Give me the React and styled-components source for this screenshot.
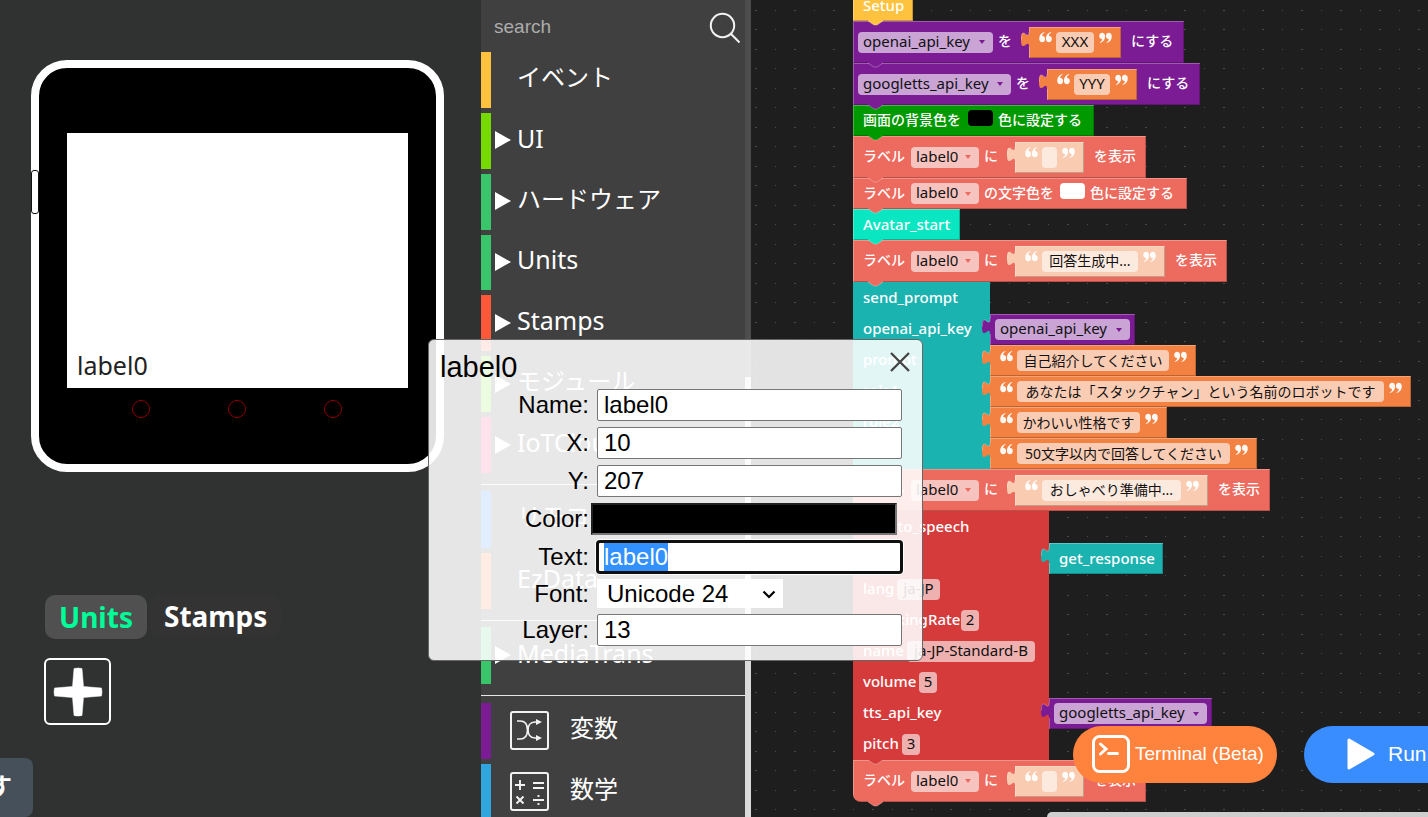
import React, { useEffect, useRef } from "react";
import styled, { createGlobalStyle, css } from "styled-components";

const sans = `"Liberation Sans", "Noto Sans CJK JP", sans-serif`;
const ui = `"Noto Sans", "Noto Sans CJK JP", sans-serif`;

const Global = createGlobalStyle`
  *, *::before, *::after { box-sizing: border-box; }
  body { margin: 0; background: #1e1e1e; overflow: hidden; font-family: ${ui}; }
  button, input, select { font: inherit; }
  button { border: 0; padding: 0; background: none; color: inherit; cursor: pointer; }
`;

const Page = styled.div`
  position: relative;
  display: grid;
  grid-template-columns: 481px 270px minmax(0, 1fr);
  height: 100vh;
  overflow: hidden;
`;

/* ---------- simulator ---------- */

const Simulator = styled.aside`
  display: flex;
  flex-direction: column;
  background: #303231;
  min-height: 0;
  overflow: hidden;
`;

const Device = styled.section`
  position: relative;
  flex: none;
  width: 413px;
  height: 412px;
  margin: 60px 0 0 31px;
  padding: 65px 28px 0;
  border: 8px solid #fff;
  border-radius: 36px;
  background: #000;
`;

const PowerKey = styled.span`
  position: absolute;
  left: -8px;
  top: 102px;
  width: 8px;
  height: 44px;
  border: 1px solid #111;
  border-radius: 3px;
  background: #fff;
`;

const Screen = styled.div`
  display: flex;
  align-items: flex-end;
  height: 255px;
  padding: 0 10px 6px;
  background: #fff;
  color: #222;
  font-size: 25px;
  line-height: 34px;
`;

const TouchKeys = styled.div`
  display: flex;
  justify-content: center;
  gap: 78px;
  padding: 12px 2px 0 0;
`;

const TouchKey = styled.button`
  width: 18px;
  height: 18px;
  border: 1px solid #8a0008;
  border-radius: 50%;
`;

const TabBar = styled.div`
  display: flex;
  gap: 3px;
  align-items: flex-start;
  margin: 123px 0 0 45px;
`;

const Tab = styled.button`
  height: ${(p) => (p.$active ? 44 : 42)}px;
  padding: 0 14px;
  border-radius: 10px;
  font-weight: 700;
  font-size: 28px;
  line-height: 42px;
  background: ${(p) => (p.$active ? "#505050" : "#333333")};
  color: ${(p) => (p.$active ? "#00ff99" : "#fff")};
`;

const AddUnit = styled.button`
  flex: none;
  display: grid;
  place-items: center;
  width: 67px;
  height: 67px;
  margin: 19px 0 0 44px;
  border: 2px solid #fff;
  border-radius: 6px;
`;

const ResetButton = styled.button`
  flex: none;
  display: flex;
  justify-content: flex-end;
  align-items: center;
  width: 33px;
  height: 59px;
  margin-top: auto;
  padding: 0 21px 6px 0;
  border-radius: 0 8px 8px 0;
  background: #45505b;
  color: #fff;
  font-size: 24px;
  font-weight: 700;
  overflow: hidden;
`;

/* ---------- toolbox ---------- */

const Toolbox = styled.nav`
  display: grid;
  grid-template-columns: minmax(0, 1fr) 6px;
  background: #404040;
  color: #fff;
  min-height: 0;
  overflow: hidden;
`;

const ToolboxBody = styled.div`
  min-height: 0;
  overflow: hidden;
`;

const SearchBar = styled.div`
  display: flex;
  align-items: center;
  height: 52px;
  padding: 3px 4px 0 13px;
`;

const SearchInput = styled.input`
  flex: 1;
  min-width: 0;
  border: 0;
  padding: 0 0 2px;
  outline: 0;
  background: transparent;
  color: #fff;
  font-family: ${sans};
  font-size: 19px;
  &::placeholder { color: #adadad; opacity: 1; }
`;

const Group = styled.div`
  display: grid;
  grid-auto-rows: 1fr;
  gap: 5px;
  height: ${(p) => p.$h}px;
`;

const Category = styled.button`
  display: flex;
  align-items: center;
  width: 100%;
  padding: 0 0 6px 4px;
  border-left: 10px solid ${(p) => p.$color};
  text-align: left;
  font-size: 25px;
  line-height: 36px;
`;

const Arrow = styled.span`
  width: 0;
  height: 0;
  margin: 5px 6px 0 0;
  border-left: 16px solid ${(p) => (p.$shown ? "#fff" : "transparent")};
  border-top: 9px solid transparent;
  border-bottom: 9px solid transparent;
`;

const CategoryText = styled.span`
  font-size: ${(p) => (p.$cjk ? 24 : 25)}px;
`;

const IconBox = styled.span`
  display: grid;
  place-items: center;
  width: 39px;
  height: 39px;
  margin: 4px 21px 0 15px;
  border: 2px solid #f2f2f2;
  border-radius: 3px;
`;

const Rule = styled.hr`
  height: 1px;
  margin: ${(p) => p.$top}px 0 ${(p) => p.$bottom}px;
  border: 0;
  background: #e6e6e6;
`;

const Track = styled.div`
  padding-top: 377px;
  background: #4d4d4d;
`;

const Thumb = styled.div`
  height: 100%;
  background: #dadada;
`;

/* ---------- workspace ---------- */

const Workspace = styled.main`
  position: relative;
  overflow: hidden;
  background-color: #1e1e1e;
`;

const GridDots = styled.div`
  position: absolute;
  inset: 0;
  background-image: repeating-linear-gradient(90deg, transparent 0 4px, #4b4b4b 4px 6px, transparent 6px 24px, #4b4b4b 24px 25px, transparent 25px 39px);
  mask-image: repeating-linear-gradient(180deg, transparent 0 10px, #000 10px 11px, transparent 11px 29px, #000 29px 30px, transparent 30px 39px);
`;

/* The stack sits at a free position on the canvas. */
const Stack = styled.div`
  position: absolute;
  left: 102px;
  top: -10px;
  display: flex;
  flex-direction: column;
  align-items: flex-start;
  color: #fff;
  font-size: 15px;
  line-height: 20px;
  white-space: nowrap;
`;

const bevel = css`
  box-shadow: inset 1px 1px 0 rgba(255, 255, 255, 0.28), inset -1px -1px 0 rgba(0, 0, 0, 0.22);
`;

const BlockBox = styled.div`
  position: relative;
  flex: none;
  display: flex;
  align-items: center;
  gap: 5px;
  width: ${(p) => p.$w}px;
  height: ${(p) => p.$h}px;
  padding-left: ${(p) => (p.$pad === undefined ? 10 : p.$pad)}px;
  background: ${(p) => p.$color};
  border-radius: ${(p) => (p.$last ? "0 0 0 8px" : "0")};
  ${bevel}
`;

const TallBlock = styled.div`
  position: relative;
  display: grid;
  grid-template-columns: ${(p) => p.$w}px auto;
  background: linear-gradient(${(p) => p.$color}, ${(p) => p.$color}) 0 0 / ${(p) => p.$w}px 100% no-repeat;
`;

const BodyRow = styled.div`
  grid-column: 1;
  display: flex;
  align-items: center;
  gap: 5px;
  height: 31px;
  padding: 0 0 1px 10px;
`;

const NotchSvg = styled.svg`
  position: absolute;
  left: 14px;
  bottom: -5px;
  z-index: 1;
`;

const TabSvg = styled.svg`
  position: absolute;
  left: -8px;
  top: 5px;
`;

const QuoteSvg = styled.svg`
  flex: none;
  margin: 0 -1px 9px 0;
  transform: ${(p) => (p.$close ? "rotate(180deg)" : "none")};
`;

const Value = styled.div`
  position: relative;
  flex: none;
  display: flex;
  align-items: center;
  gap: 5px;
  width: ${(p) => p.$w}px;
  height: 31px;
  padding-left: ${(p) => (p.$pad === undefined ? 10 : p.$pad)}px;
  margin: ${(p) => (p.$inline ? "0 5px 0 11px" : "0")};
  background: ${(p) => p.$color};
  ${bevel}
`;

const Text = styled.span`
  flex: none;
  width: ${(p) => (p.$w ? p.$w + "px" : "auto")};
  padding-bottom: 2px;
  font-weight: 500;
  font-size: ${(p) => (p.$cjk ? 14 : 15)}px;
`;

const Dropdown = styled.button`
  flex: none;
  display: flex;
  align-items: center;
  justify-content: space-between;
  width: ${(p) => p.$w}px;
  height: 21px;
  padding: 0 8px 2px 5px;
  border-radius: 4px;
  background: rgba(255, 255, 255, 0.6);
  color: #111;
  line-height: 19px;
  &::after {
    content: "";
    margin-top: 2px;
    border: 3px solid transparent;
    border-top: 4px solid ${(p) => p.$color};
    border-bottom: 0;
  }
`;

const Field = styled.input`
  flex: none;
  width: ${(p) => p.$w}px;
  height: 21px;
  padding: 0 0 2px;
  border: 0;
  border-radius: 4px;
  outline: 0;
  background: rgba(255, 255, 255, 0.6);
  color: #111;
  text-align: center;
  font-size: ${(p) => (p.$cjk ? 14 : 15)}px;
`;

const Swatch = styled.button`
  flex: none;
  align-self: flex-start;
  width: 25px;
  height: 16px;
  margin-top: 5px;
  border-radius: 4px;
  background: ${(p) => p.$fill};
`;

const HScroll = styled.div`
  position: absolute;
  left: 296px;
  right: 0;
  bottom: 0;
  height: 5px;
  border-radius: 5px 0 0 0;
  background: #cecece;
`;

const Actions = styled.div`
  position: absolute;
  left: 322px;
  bottom: 34px;
  z-index: 3;
  display: flex;
  gap: 27px;
`;

const Action = styled.button`
  flex: none;
  display: flex;
  align-items: center;
  gap: ${(p) => p.$gap}px;
  width: 204px;
  height: 57px;
  padding: 0 0 2px ${(p) => p.$pad}px;
  border-radius: 29px;
  background: ${(p) => p.$color};
  color: #fff;
  font-family: ${sans};
  font-size: ${(p) => p.$size}px;
  white-space: nowrap;
`;

/* ---------- property dialog ---------- */

const Dialog = styled.form`
  position: absolute;
  left: 428px;
  top: 339px;
  z-index: 5;
  width: 495px;
  height: 322px;
  padding: 11px 20px 14px 11px;
  border: 1px solid #666;
  border-radius: 6px;
  background: rgba(255, 255, 255, 0.88);
  color: #000;
  font-family: ${sans};
  font-size: 24px;
`;

const DialogHead = styled.header`
  display: flex;
  justify-content: space-between;
  align-items: flex-start;
  height: 38px;
  margin-right: -9px;
`;

const DialogTitle = styled.h2`
  margin: 0;
  font-size: 29px;
  font-weight: 400;
  line-height: 32px;
`;

const Close = styled.button`
  width: 20px;
  height: 20px;
  margin: 1px 1px 0 0;
  display: grid;
`;

const Rows = styled.div`
  display: grid;
  gap: 6px;
`;

const FormRow = styled.div`
  display: grid;
  grid-template-columns: 149px minmax(0, 1fr);
  column-gap: 8px;
  align-items: center;
  label { text-align: right; line-height: 28px; }
`;

const TextInput = styled.input`
  width: 100%;
  height: 32px;
  padding: 0 6px;
  border: 1px solid #767676;
  border-radius: 2px;
  background: #fff;
  color: #000;
  outline: 0;
  &:focus { border: 2px solid #101010; padding: 0 5px; border-radius: 3px; box-shadow: 0 0 0 1px #101010, 0 0 0 2px #fff; }
  &::selection { background: #3390ff; color: #fff; }
`;

const ColorInput = styled.input`
  position: relative;
  left: -6px;
  width: 306px;
  height: 32px;
  border: 2px inset #767676;
  background: #000;
  color: #000;
`;

const SelectWrap = styled.div`
  position: relative;
  width: 186px;
  height: 29px;
  svg { position: absolute; right: 7px; top: 11px; pointer-events: none; }
`;

const FontSelect = styled.select`
  width: 100%;
  height: 29px;
  padding: 0 10px;
  border: 0;
  appearance: none;
  background: #fff;
  color: #000;
`;

/* ---------- block parts ---------- */

const C = {
  setup: "#ffc23e", variable: "#7b1c94", text: "#f38142", screen: "#009900", label: "#ec6a5e",
  avatar: "#09e6c1", prompt: "#1ab3b0", tts: "#d63b3b", shadow: "#f9cbb0",
};

const Notch = ({ color }) => (
  <NotchSvg width="17" height="6" viewBox="0 0 17 6">
    <path d="M1 0V1L7 5H10L16 1V0Z" fill={color} />
    <path d="M1 1L7 5H10L16 1" fill="none" stroke="#fff" strokeOpacity=".28" />
  </NotchSvg>
);

const PlugTab = ({ color }) => (
  <TabSvg width="9" height="16" viewBox="0 0 9 16">
    <path d="M9 0H8C8 10 0 -8 0 7.5S8 5 8 15H9Z" fill={color} />
    <path d="M8 0C8 10 0.5 -8 0.5 7.5" fill="none" stroke="#fff" strokeOpacity=".28" />
  </TabSvg>
);

const Block = ({ children, ...rest }) => (
  <BlockBox {...rest}>
    {children}
    <Notch color={rest.$color} />
  </BlockBox>
);

const Quote = ({ close }) => (
  <QuoteSvg $close={close} width="13" height="11" viewBox="0 0 13 11" fill="#fff" fillOpacity=".95" aria-hidden="true">
    <path d="M5.600 .6C4 1.500 3.200 2.800 3.200 4.100C4.900 4 6.100 5.200 6.100 7C6.100 9 4.900 10.300 3.200 10.300C1.300 10.300 .2 8.900 .2 6.600C.2 3.600 2 1 5.200 0Z" />
    <path d="M12.300 .6C10.700 1.500 9.900 2.800 9.900 4.100C11.600 4 12.800 5.200 12.800 7C12.800 9 11.600 10.300 9.900 10.300C8 10.300 6.900 8.900 6.900 6.600C6.900 3.600 8.700 1 11.900 0Z" />
  </QuoteSvg>
);

const TextValue = ({ value, w, cjk, inline, shadow }) => {
  const color = shadow ? C.shadow : C.text;
  return (
    <Value $w={w + 54} $color={color} $inline={inline}>
      <PlugTab color={color} />
      <Quote />
      <Field $w={w} $cjk={cjk} defaultValue={value} aria-label="text" />
      <Quote close />
    </Value>
  );
};

const VarValue = ({ name, w }) => (
  <Value $w={w + 10} $color={C.variable} $pad={5}>
    <PlugTab color={C.variable} />
    <Dropdown type="button" $w={w} $color={C.variable}>{name}</Dropdown>
  </Value>
);

const SetVar = ({ name, nameW, value, valueW, w }) => (
  <Block $w={w} $h={42} $color={C.variable} $pad={5}>
    <Dropdown type="button" $w={nameW} $color={C.variable}>{name}</Dropdown>
    <Text $cjk $w={15}>を</Text>
    <TextValue value={value} w={valueW} inline />
    <Text $cjk>にする</Text>
  </Block>
);

const ShowLabel = ({ value, valueW, last }) => (
  <Block $w={valueW + 278} $h={42} $color={C.label} $last={last}>
    <Text $cjk $w={43}>ラベル</Text>
    <Dropdown type="button" $w={68} $color={C.label}>label0</Dropdown>
    <Text $cjk $w={15}>に</Text>
    <TextValue value={value} w={valueW} cjk inline shadow />
    <Text $cjk>を表示</Text>
  </Block>
);

const TitleRow = styled(BodyRow)`
  height: 32px;
`;

const Param = ({ name, w, value, fieldW }) => (
  <BodyRow>
    <Text $w={w}>{name}</Text>
    <Field $w={fieldW} defaultValue={value} aria-label={name} />
  </BodyRow>
);

const ValueCell = styled.div`
  grid-column: 2;
`;

const groups = [
  [["イベント", "#ffc23e", false], ["UI", "#76d900", true], ["ハードウェア", "#39c66b", true], ["Units", "#39c66b", true],
    ["Stamps", "#ff5838", true], ["モジュール", "#64e000", true], ["IoTCloud", "#ff1064", true]],
  [["リモコン", "#0075ff", false], ["EzData", "#ff6c21", false]],
  [["MediaTrans", "#39c66b", true]],
];
const isCjk = (s) => /[\u3000-\u9fff]/.test(s);

const CategoryGroup = ({ items, h }) => (
  <Group $h={h}>
    {items.map(([name, color, arrow]) => (
      <Category key={name} type="button" $color={color}>
        <Arrow $shown={arrow} />
        <CategoryText $cjk={isCjk(name)}>{name}</CategoryText>
      </Category>
    ))}
  </Group>
);

export default function App() {
  const textRef = useRef(null);
  useEffect(() => {
    textRef.current.focus();
    textRef.current.select();
  }, []);

  return (
    <Page>
      <Global />

      <Simulator>
        <Device>
          <PowerKey />
          <Screen>label0</Screen>
          <TouchKeys>
            <TouchKey aria-label="A" />
            <TouchKey aria-label="B" />
            <TouchKey aria-label="C" />
          </TouchKeys>
        </Device>
        <TabBar>
          <Tab type="button" $active>Units</Tab>
          <Tab type="button">Stamps</Tab>
        </TabBar>
        <AddUnit type="button" aria-label="Add unit">
          <svg width="50" height="50" viewBox="0 0 50 50">
            <path d="M21 1.5Q25 .5 29 1.5L30.5 19.5L48.5 21Q49.5 25 48.5 29L30.5 30.5L29 48.5Q25 49.5 21 48.5L19.5 30.5L1.5 29Q.5 25 1.5 21L19.5 19.5Z" fill="#fff" stroke="#fff" strokeOpacity=".5" strokeLinejoin="round" />
          </svg>
        </AddUnit>
        <ResetButton type="button">す</ResetButton>
      </Simulator>

      <Toolbox>
        <ToolboxBody>
          <SearchBar>
            <SearchInput placeholder="search" aria-label="search" />
            <svg width="32" height="32" viewBox="0 0 32 32" fill="none" stroke="#f2f2f2" strokeWidth="2">
              <circle cx="13.5" cy="13.5" r="11.7" />
              <path d="M21.8 21.8L30.5 30.5" />
            </svg>
          </SearchBar>
          <CategoryGroup items={groups[0]} h={421} />
          <Rule $top={11} $bottom={6} />
          <CategoryGroup items={groups[1]} h={118} />
          <Rule $top={11} $bottom={6} />
          <CategoryGroup items={groups[2]} h={57} />
          <Rule $top={11} $bottom={7} />
          <Group $h={117}>
            <Category type="button" $color="#7b1c94">
              <IconBox>
                <svg width="27" height="24" viewBox="0 0 27 24" fill="none" stroke="#f2f2f2" strokeWidth="1.7">
                  <path d="M1 3H4C10 3 11.500 7 11.500 12S10 21 4 21H1" />
                  <path d="M22 4H19C14 4 12 8 12 12S14 20 19 20H22" />
                  <path d="M20 1L26 4L20 7Z M20 17L26 20L20 23Z" fill="#f2f2f2" stroke="none" />
                </svg>
              </IconBox>
              <CategoryText $cjk>変数</CategoryText>
            </Category>
            <Category type="button" $color="#30a6de">
              <IconBox>
                <svg width="31" height="29" viewBox="0 0 31 29" fill="none" stroke="#f2f2f2" strokeWidth="1.9">
                  <path d="M1 8H11M6 3V13M19 6H30M19 11H30M2.500 19.500L9.500 26.500M9.500 19.500L2.500 26.500M19 23H30" />
                  <path d="M24.500 18V20M24.500 26V28" />
                </svg>
              </IconBox>
              <CategoryText $cjk>数学</CategoryText>
            </Category>
          </Group>
        </ToolboxBody>
        <Track><Thumb /></Track>
      </Toolbox>

      <Workspace>
        <GridDots />
        <Stack>
          <Block $w={60} $h={31} $color={C.setup}><Text>Setup</Text></Block>
          <SetVar name="openai_api_key" nameW={135} value="XXX" valueW={38} w={331} />
          <SetVar name="googletts_api_key" nameW={153} value="YYY" valueW={36} w={347} />
          <Block $w={241} $h={31} $color={C.screen}>
            <Text $cjk $w={100}>画面の背景色を</Text>
            <Swatch type="button" $fill="#000" aria-label="black" />
            <Text $cjk>色に設定する</Text>
          </Block>
          <ShowLabel value="" valueW={15} />
          <Block $w={334} $h={31} $color={C.label}>
            <Text $cjk $w={43}>ラベル</Text>
            <Dropdown type="button" $w={68} $color={C.label}>label0</Dropdown>
            <Text $cjk $w={71}>の文字色を</Text>
            <Swatch type="button" $fill="#fff" aria-label="white" />
            <Text $cjk>色に設定する</Text>
          </Block>
          <Block $w={107} $h={31} $color={C.avatar}><Text>Avatar_start</Text></Block>
          <ShowLabel value="回答生成中..." valueW={96} />

          <TallBlock $w={137} $color={C.prompt}>
            <TitleRow><Text>send_prompt</Text></TitleRow>
            <BodyRow><Text>openai_api_key</Text></BodyRow>
            <ValueCell><VarValue name="openai_api_key" w={135} /></ValueCell>
            <BodyRow><Text>prompt</Text></BodyRow>
            <ValueCell><TextValue value="自己紹介してください" w={152} cjk /></ValueCell>
            <BodyRow><Text>role1</Text></BodyRow>
            <ValueCell><TextValue value="あなたは「スタックチャン」という名前のロボットです" w={367} cjk /></ValueCell>
            <BodyRow><Text>role2</Text></BodyRow>
            <ValueCell><TextValue value="かわいい性格です" w={123} cjk /></ValueCell>
            <BodyRow />
            <ValueCell><TextValue value="50文字以内で回答してください" w={213} cjk /></ValueCell>
            <Notch color={C.prompt} />
          </TallBlock>

          <ShowLabel value="おしゃべり準備中..." valueW={139} />

          <TallBlock $w={196} $color={C.tts}>
            <TitleRow><Text>text_to_speech</Text></TitleRow>
            <BodyRow />
            <ValueCell>
              <Value $w={114} $color={C.prompt}>
                <PlugTab color={C.prompt} />
                <Text>get_response</Text>
              </Value>
            </ValueCell>
            <Param name="lang" w={29} value="ja-JP" fieldW={43} />
            <Param name="speakingRate" w={93} value="2" fieldW={18} />
            <Param name="name" w={39} value="ja-JP-Standard-B" fieldW={128} />
            <Param name="volume" w={51} value="5" fieldW={18} />
            <BodyRow><Text>tts_api_key</Text></BodyRow>
            <ValueCell><VarValue name="googletts_api_key" w={153} /></ValueCell>
            <Param name="pitch" w={34} value="3" fieldW={18} />
            <Notch color={C.tts} />
          </TallBlock>

          <ShowLabel value="" valueW={15} last />
        </Stack>

        <Actions>
          <Action type="button" $color="#ff823d" $pad={19} $gap={5} $size={19}>
            <svg width="38" height="38" viewBox="0 0 38 38" fill="none" stroke="#fff" strokeWidth="3">
              <rect x="1.500" y="1.500" width="35" height="35" rx="6" />
              <path d="M8.500 9L14 14L8.500 19M16.500 18.500H25.500" strokeLinecap="round" />
            </svg>
            Terminal (Beta)
          </Action>
          <Action type="button" $color="#3a8dff" $pad={43} $gap={13} $size={21}>
            <svg width="28" height="32" viewBox="0 0 28 32">
              <path d="M2 2L26 16L2 30Z" fill="#fff" stroke="#fff" strokeWidth="3" strokeLinejoin="round" />
            </svg>
            Run
          </Action>
        </Actions>
        <HScroll />
      </Workspace>

      <Dialog onSubmit={(e) => e.preventDefault()}>
        <DialogHead>
          <DialogTitle>label0</DialogTitle>
          <Close type="button" aria-label="Close">
            <svg width="20" height="20" viewBox="0 0 20 20" stroke="#444" strokeWidth="2.300">
              <path d="M1 1L19 19M19 1L1 19" />
            </svg>
          </Close>
        </DialogHead>
        <Rows>
          <FormRow><label htmlFor="p-name">Name:</label><TextInput id="p-name" defaultValue="label0" /></FormRow>
          <FormRow><label htmlFor="p-x">X:</label><TextInput id="p-x" defaultValue="10" /></FormRow>
          <FormRow><label htmlFor="p-y">Y:</label><TextInput id="p-y" defaultValue="207" /></FormRow>
          <FormRow><label htmlFor="p-color">Color:</label><ColorInput id="p-color" readOnly /></FormRow>
          <FormRow><label htmlFor="p-text">Text:</label><TextInput id="p-text" ref={textRef} defaultValue="label0" /></FormRow>
          <FormRow>
            <label htmlFor="p-font">Font:</label>
            <SelectWrap>
              <FontSelect id="p-font" defaultValue="Unicode 24"><option>Unicode 24</option></FontSelect>
              <svg width="14" height="9" viewBox="0 0 14 9" fill="none" stroke="#000" strokeWidth="2.200"><path d="M1.500 1.500L7 7L12.500 1.500" /></svg>
            </SelectWrap>
          </FormRow>
          <FormRow><label htmlFor="p-layer">Layer:</label><TextInput id="p-layer" defaultValue="13" /></FormRow>
        </Rows>
      </Dialog>
    </Page>
  );
}
